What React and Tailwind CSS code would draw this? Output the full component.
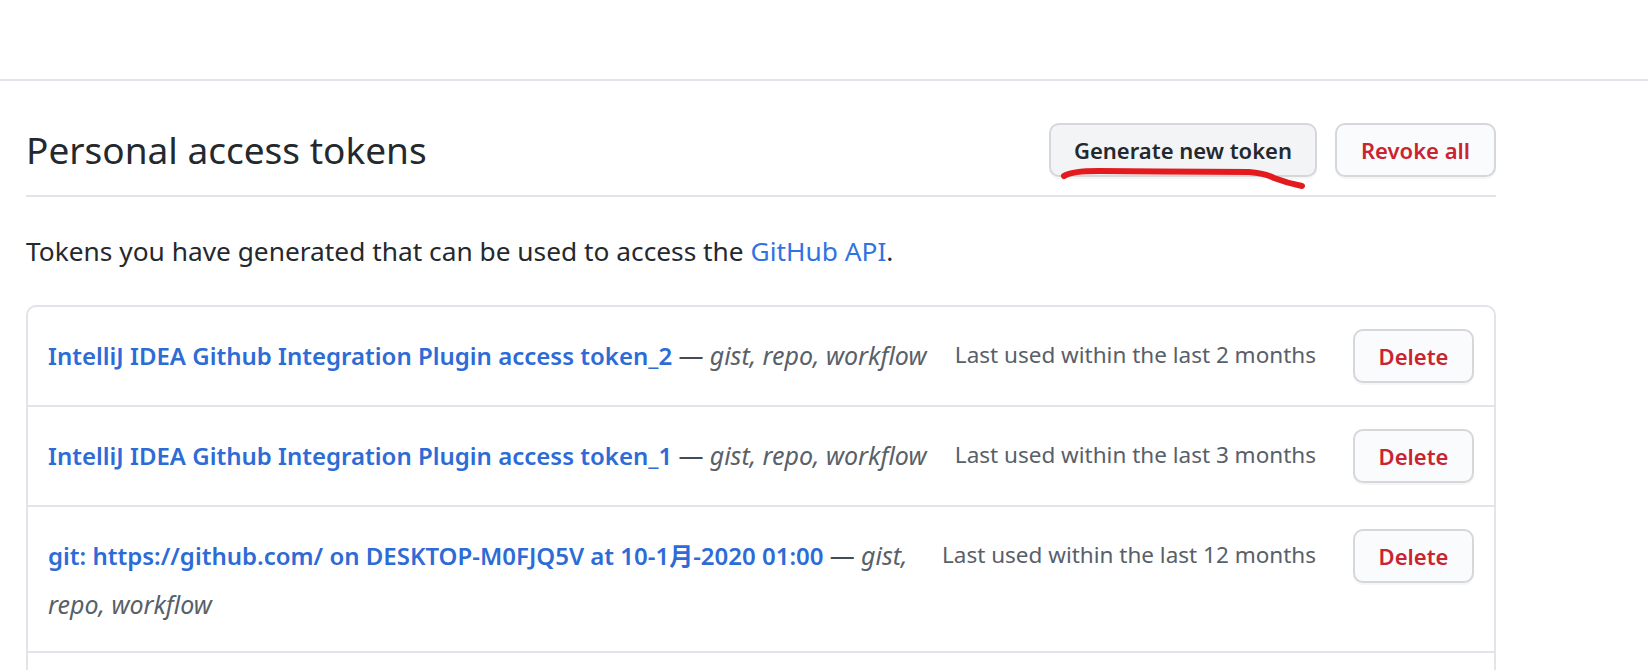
import React from 'react';

const tokens = [
  {
    name: 'IntelliJ IDEA Github Integration Plugin access token_2',
    scopes: ['gist, repo, workflow'],
    lastUsed: 'Last used within the last 2 months',
  },
  {
    name: 'IntelliJ IDEA Github Integration Plugin access token_1',
    scopes: ['gist, repo, workflow'],
    lastUsed: 'Last used within the last 3 months',
  },
  {
    name: 'git: https://github.com/ on DESKTOP-M0FJQ5V at 10-1月-2020 01:00',
    // wraps after "gist," like on the real page
    scopes: ['gist,', 'repo, workflow'],
    lastUsed: 'Last used within the last 12 months',
  },
];

// hand drawn red underline under the generate button
function Scribble() {
  return (
    <svg
      className="absolute left-[10px] top-[44px] pointer-events-none"
      width="260"
      height="26"
      viewBox="0 0 260 26"
      fill="none"
    >
      <path
        d="M5 9 Q 12 4, 40 4 L 100 4.5 L 190 5 Q 205 6, 215 11 Q 228 16, 243 19"
        stroke="#e31b1f"
        strokeWidth="6"
        strokeLinecap="round"
        strokeLinejoin="round"
      />
    </svg>
  );
}

function TokenRow({ token }) {
  const [first, second] = token.scopes;
  return (
    <li className="flex items-start px-[20px] py-[22px] border-t-2 border-[#e1e4e8] first:border-t-0">
      <div className="flex-1 min-w-0 text-[24px] leading-[48px] pt-[2px] text-[#444d56]">
        <a href="#" className="font-semibold text-[#2d6bd6]">
          {token.name}
        </a>{' '}
        <span className="text-[25px]">—</span>{' '}
        <em className="text-[25px] text-[#586069]">{first}</em>
        {second && (
          <>
            <br />
            <em className="text-[25px] text-[#586069]">{second}</em>
          </>
        )}
      </div>
      <span className="ml-[8px] shrink-0 text-[22.5px] leading-[48px] pt-[2px] text-[#586069]">
        {token.lastUsed}
      </span>
      <button className="ml-[37px] shrink-0 w-[121px] h-[54px] rounded-[10px] border-2 border-[#d5d7da] bg-[#fafbfc] text-[22px] font-semibold text-[#cb2431] shadow-[0_2px_0_rgba(27,31,35,0.04)]">
        Delete
      </button>
    </li>
  );
}

export default function App() {
  return (
    <div className="min-h-screen bg-white font-['Noto_Sans','Noto_Sans_CJK_SC',sans-serif] text-[#24292e]">
      <div className="h-[81px] border-b-2 border-[#e1e4e8]"></div>

      <div className="ml-[26px] w-[1470px]">
        {/* Subhead */}
        <div className="flex items-center justify-between pt-[42px] pb-[18px] border-b-2 border-[#e1e4e8]">
          <h2 className="text-[37px] font-normal leading-[54px]">Personal access tokens</h2>
          <div className="relative flex gap-[18px]">
            <button className="w-[268px] h-[54px] rounded-[10px] border-2 border-[#d5d7da] bg-[#f3f4f6] text-[22px] font-semibold text-[#24292e] shadow-[0_2px_0_rgba(27,31,35,0.04)]">
              Generate new token
            </button>
            <button className="w-[161px] h-[54px] rounded-[10px] border-2 border-[#d5d7da] bg-[#fafbfc] text-[22px] font-semibold text-[#cb2431] shadow-[0_2px_0_rgba(27,31,35,0.04)]">
              Revoke all
            </button>
            <Scribble />
          </div>
        </div>

        <p className="mt-[36px] text-[26.3px] leading-[36px]">
          Tokens you have generated that can be used to access the{' '}
          <a href="#" className="text-[#2f74e0]">
            GitHub API
          </a>
          .
        </p>

        <ul className="mt-[36px] border-2 border-[#e1e4e8] rounded-[10px]">
          {tokens.map((t) => (
            <TokenRow key={t.name} token={t} />
          ))}
          <li className="h-[100px] border-t-2 border-[#e1e4e8]"></li>
        </ul>
      </div>
    </div>
  );
}
